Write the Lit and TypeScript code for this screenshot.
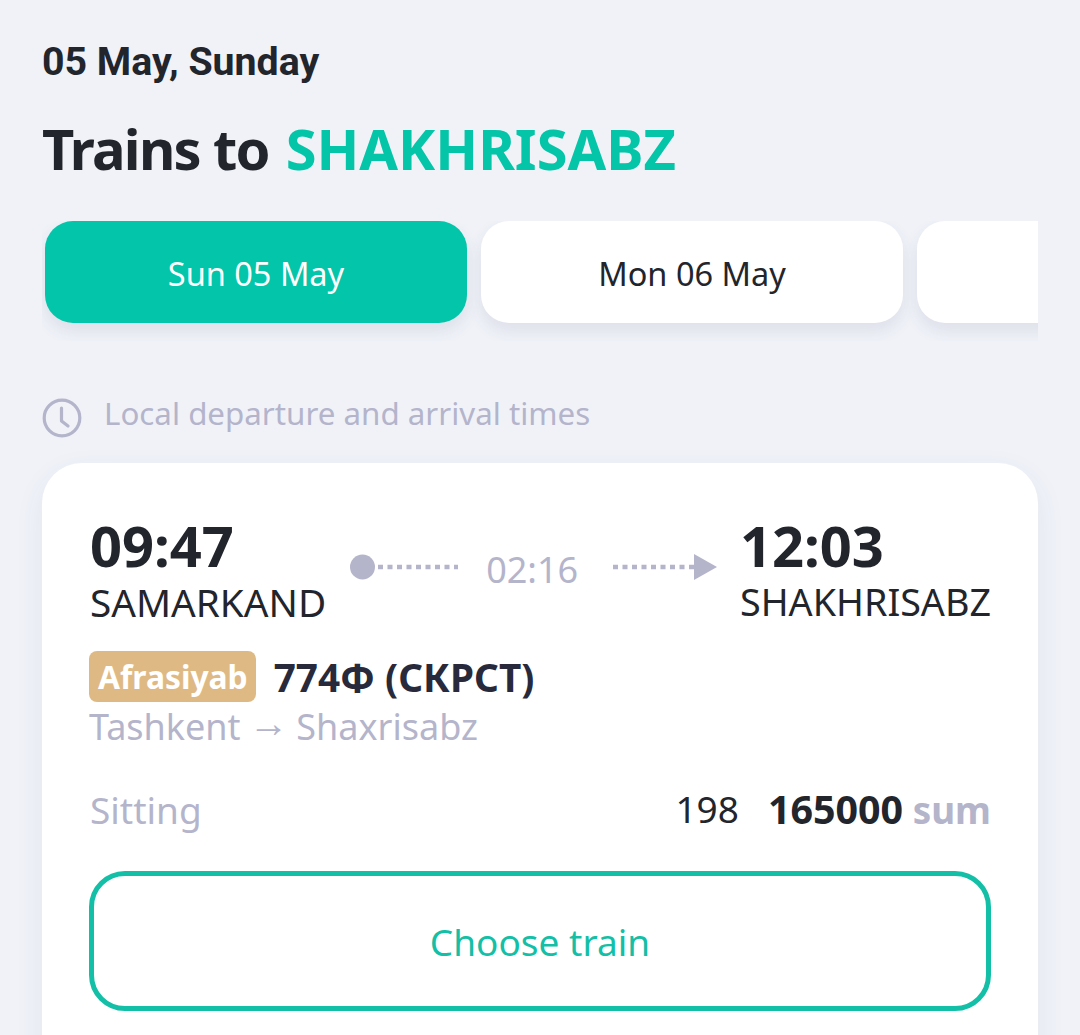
import { LitElement, html, css } from "lit";
import { customElement } from "lit/decorators.js";

@customElement("app-root")
export class AppRoot extends LitElement {
  static styles = css`
    :host {
      display: block;
      width: 1080px;
      height: 1035px;
      overflow: hidden;
      background: #f0f2f8;
      font-family: "Noto Sans", sans-serif;
      color: #22252c;
    }
    .page {
      display: flex;
      flex-direction: column;
      padding: 38px 42px 0;
    }
    .date {
      font-family: Roboto, sans-serif;
      font-weight: 700;
      font-size: 39.3px;
      line-height: 48px;
    }
    .title {
      margin: 26px 0 0 0;
      font-weight: 700;
      font-size: 56px;
      line-height: 72px;
      white-space: nowrap;
      letter-spacing: -1.7px;
    }
    .title span { color: #05c5a8; font-weight: 700; letter-spacing: 0; margin-left: 4px; }
    .tabs {
      display: flex;
      gap: 14px;
      overflow: hidden;
      margin-top: 37px;
      padding: 0 0 18px 3px;
    }
    .tab {
      flex: 0 0 422px;
      height: 102px;
      box-sizing: border-box;
      padding-top: 2px;
      border-radius: 28px;
      background: #fff;
      display: flex;
      align-items: center;
      justify-content: center;
      font-size: 32.5px;
      box-shadow: 0 8px 16px rgba(60, 70, 110, 0.1);
    }
    .tab.on { background: #03c5a9; color: #fff; }
    .note {
      display: flex;
      align-items: flex-start;
      gap: 22px;
      margin-top: 49px;
      color: #b4b4cb;
      font-size: 31.3px;
      line-height: 48px;
    }
    .note svg { flex: none; margin-top: 8px; }
    .note span { margin-top: -1px; }
    .card {
      margin-top: 25px;
      background: #fff;
      border-radius: 40px;
      padding: 48px 47px 40px 48px;
      height: 620px;
      box-shadow: 0 10px 30px rgba(60, 70, 110, 0.07);
    }
    .route {
      display: flex;
      justify-content: space-between;
      align-items: flex-start;
    }
    .time { font-size: 56px; font-weight: 700; line-height: 69px; }
    .city { font-size: 37.7px; line-height: 44px; }
    .city.from { font-size: 38.7px; }
    .mid {
      flex: 1;
      display: flex;
      align-items: center;
      margin: 23px 23px 0 24px;
      height: 66px;
    }
    .dur { font-size: 36px; color: #b4b4cb; margin: 4px 0 0 28px; }
    .arrow { margin-left: auto; }
    .train { display: flex; align-items: center; gap: 18px; margin: 26px 0 0 -1px; }
    .badge {
      background: #dfb983;
      color: #fff;
      font-weight: 700;
      font-size: 31.8px;
      line-height: 51px;
      padding: 0 8px 0 9px;
      border-radius: 8px;
    }
    .num { font-size: 38.7px; font-weight: 700; color: #282a3c; position: relative; top: 1px; }
    .path { font-size: 36px; line-height: 50px; color: #b4b4cb; margin-left: -1px; }
    .path span {
      font-family: "Liberation Sans", sans-serif;
      font-size: 40px;
      line-height: 0;
      vertical-align: 3px;
      margin: 0 -1.5px;
    }
    .seat {
      display: flex;
      justify-content: space-between;
      align-items: center;
      margin-top: 32px;
      font-size: 37px;
      line-height: 50px;
      color: #b4b4cb;
    }
    .price { display: flex; gap: 29px; color: #22252c; }
    .price b { font-weight: 700; font-size: 39.4px; }
    .price i { font-style: normal; font-weight: 700; color: #b4b4cb; font-size: 36.8px; }
    .btn {
      margin: 36px 0 0 -1px;
      height: 130px;
      border: 5px solid #13bfa6;
      border-radius: 36px;
      display: flex;
      align-items: center;
      justify-content: center;
      color: #13bfa6;
      font-size: 37px;
    }
  `;

  render() {
    return html`<div class="page">
      <div class="date">05 May, Sunday</div>
      <div class="title">Trains to <span>SHAKHRISABZ</span></div>
      <div class="tabs">
        <div class="tab on">Sun 05 May</div>
        <div class="tab">Mon 06 May</div>
        <div class="tab"></div>
      </div>
      <div class="note">
        <svg width="40" height="40" viewBox="0 0 40 40" fill="none" stroke="#b4b4cb" stroke-width="3.2" stroke-linecap="round" stroke-linejoin="round">
          <circle cx="20" cy="20" r="17.8"></circle>
          <path d="M19.5 10v13l6.5 5"></path>
        </svg>
        <span>Local departure and arrival times</span>
      </div>
      <div class="card">
        <div class="route">
          <div>
            <div class="time">09:47</div>
            <div class="city from">SAMARKAND</div>
          </div>
          <div class="mid">
            <svg width="108" height="26" viewBox="0 0 108 26">
              <circle cx="12.5" cy="13" r="12.5" fill="#b4b4cb"></circle>
              <path d="M28 13H108" stroke="#b4b4cb" stroke-width="4.5" stroke-dasharray="5 4.5"></path>
            </svg>
            <span class="dur">02:16</span>
            <svg class="arrow" width="104" height="28" viewBox="0 0 104 28">
              <path d="M0 14H81" stroke="#b4b4cb" stroke-width="4.5" stroke-dasharray="5 4.5"></path>
              <path d="M81 1L104 14L81 27Z" fill="#b4b4cb"></path>
            </svg>
          </div>
          <div>
            <div class="time">12:03</div>
            <div class="city">SHAKHRISABZ</div>
          </div>
        </div>
        <div class="train">
          <span class="badge">Afrasiyab</span>
          <span class="num">774Ф (СКРСТ)</span>
        </div>
        <div class="path">Tashkent <span>→</span> Shaxrisabz</div>
        <div class="seat">
          <span>Sitting</span>
          <span class="price"><span>198</span><span><b>165000</b> <i>sum</i></span></span>
        </div>
        <div class="btn">Choose train</div>
      </div>
    </div>`;
  }
}
